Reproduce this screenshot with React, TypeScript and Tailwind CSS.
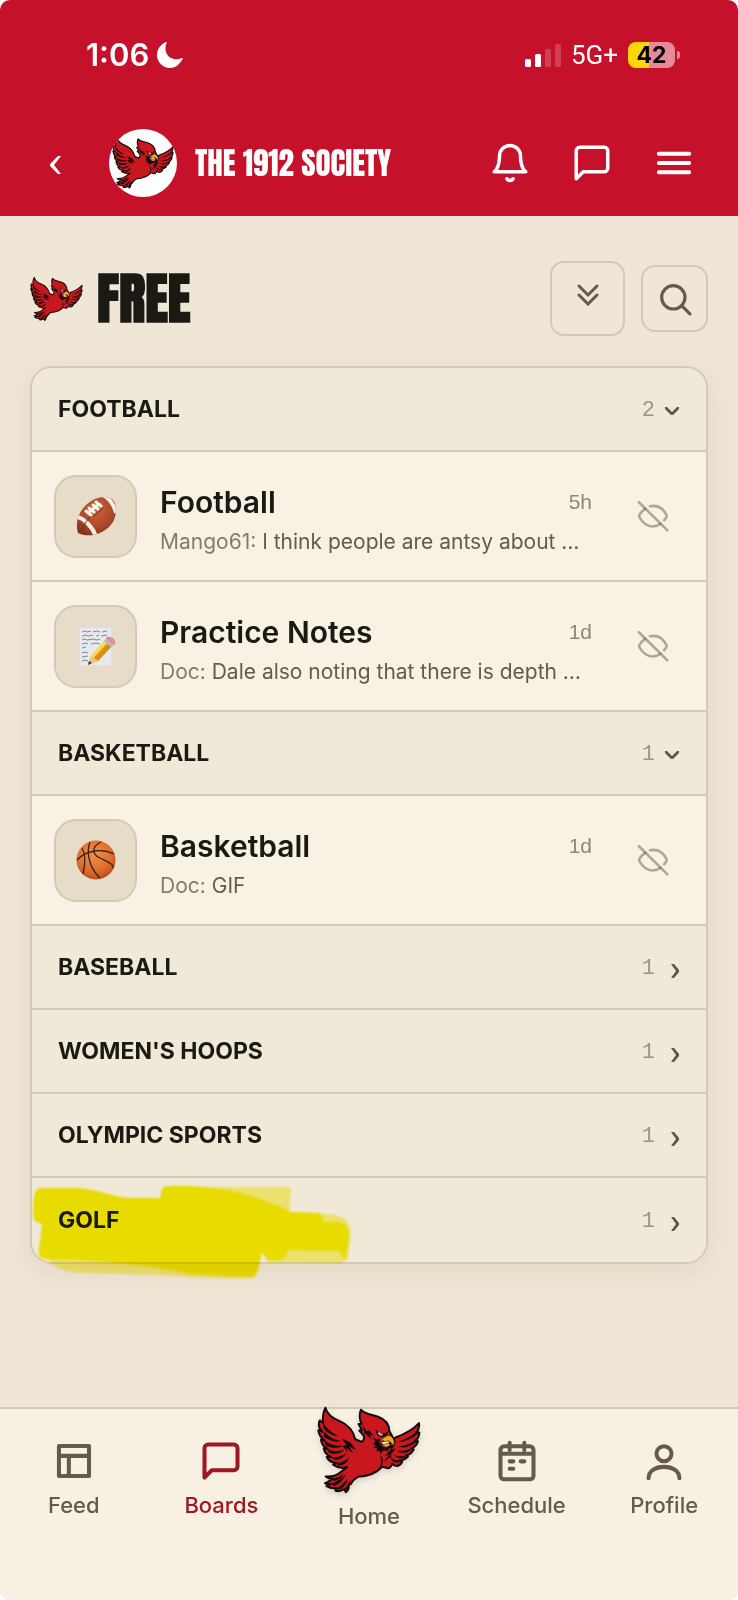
import type { ReactNode } from 'react';

type Board = { name: string; time: string; author: string; preview: string; icon: ReactNode };
type Section = { title: string; count: number; boards?: Board[] };

function Cardinal({ className }: { className?: string }) {
  return (
    <svg viewBox="82 46 310 266" className={className} aria-hidden="true">
      <g stroke="#120c0c" strokeWidth="6" strokeLinejoin="round">
        <path
          fill="#c9171e"
          d="M107 54C112 76 130 86 150 94C174 104 190 124 196 148L216 156C222 150 224 142 220 136L208 122L216 121L206 103L215 102C208 90 208 72 213 60C224 74 244 74 264 81C286 89 297 102 298 124L311 148C313 156 312 162 309 167L288 176L290 181C298 166 300 152 316 143C340 134 366 122 386 100C388 112 384 122 378 129L387 128C387 140 382 148 374 153L383 154C380 166 372 172 364 175L370 178C366 188 358 194 349 196L353 200C346 208 338 212 328 211L336 216C330 226 322 230 313 226L306 221C304 230 298 236 291 234L276 230C262 246 238 258 204 260C192 266 188 272 183 282L176 282C178 292 176 300 168 306L163 297C156 302 148 304 137 302L141 294C130 296 120 294 110 288L124 281C116 284 111 283 106 279C116 276 122 270 128 266C120 266 113 264 108 259C124 260 140 256 150 248L172 231C158 236 144 234 130 224L140 219C128 218 116 212 111 201L124 201C112 196 104 186 102 175L113 177C102 170 94 162 94 149L104 152C94 144 87 134 86 121L98 126C88 116 85 104 90 92L100 99C98 82 100 66 107 54Z"
        />
      </g>
      <g fill="#120c0c">
        <path d="M100 98C112 120 130 130 146 140C130 138 114 130 102 116ZM104 126C118 144 136 150 154 154C136 158 118 152 102 140ZM104 152C122 166 142 168 160 168C144 176 126 176 108 166ZM113 177C130 186 148 184 164 180C150 192 134 194 118 188ZM124 201C140 204 156 198 170 190C160 206 146 212 132 208ZM140 219C154 220 168 212 178 202C172 218 160 228 146 226Z" />
        <path d="M156 146L182 158L198 180L178 170L190 190L168 172L176 188L158 168L170 166Z" />
        <path d="M376 128C356 144 338 152 322 156C342 156 362 148 380 134ZM374 153C356 164 338 168 324 170C342 176 360 170 376 158ZM364 175C350 182 334 184 320 182C334 192 350 190 362 180ZM349 196C336 200 322 200 312 194C322 206 336 208 346 202ZM328 211C316 212 308 208 300 200C304 214 316 220 326 217Z" />
        <path d="M318 150L296 176L304 174L286 198L298 194L280 216L308 196L298 197L318 176L306 180Z" />
        <path d="M218 104L230 124L238 122L252 140L238 134L246 150L230 134L224 132Z" />
        <path d="M249 142C256 148 262 148 270 146L268 158L280 172L292 172L302 167C298 178 288 182 278 182L272 191L268 183L259 184L262 175L250 174L257 166L248 162L256 156Z" />
        <path d="M256 118L268 130L286 130L298 120L290 136L274 142C264 140 258 132 256 118Z" />
        <path d="M270 194C282 206 280 222 270 234C274 218 274 206 270 194Z" />
        <path d="M124 281C140 276 154 264 168 254C160 270 148 282 132 288ZM141 294C154 288 164 276 174 266C170 280 160 294 150 298ZM163 297C172 288 176 278 182 270L180 286L170 302ZM128 266C142 264 152 258 162 250C154 264 144 270 132 272Z" />
      </g>
      <path fill="#f4f6f6" d="M264 127L279 133L274 138C268 137 265 133 264 127Z" />
      <circle cx="272" cy="133" r="2" fill="#120c0c" />
      <path
        fill="#eda82a"
        stroke="#120c0c"
        strokeWidth="2"
        d="M288 139C296 134 306 138 311 150C314 158 312 164 308 168C306 160 302 156 294 154L284 160L280 152C272 156 270 150 276 147Z"
      />
      <path fill="#f3ecd2" stroke="#120c0c" strokeWidth="1.5" d="M273 156L298 153L296 160L280 164Z" />
      <path fill="#eda82a" d="M278 165L296 161L300 166L288 171Z" />
    </svg>
  );
}

function FootballIcon() {
  return (
    <svg viewBox="0 0 40 40" className="size-10" aria-hidden="true">
      <defs>
        <radialGradient id="leather" cx="50%" cy="35%" r="70%">
          <stop offset="0%" stopColor="#c9633a" />
          <stop offset="60%" stopColor="#a8472a" />
          <stop offset="100%" stopColor="#6d2a18" />
        </radialGradient>
        <clipPath id="football-shape">
          <path d="M2 37C-1 27 2 16 11 8C19 1 29-1 36 3C41 7 41 19 37 26C30 37 14 43 2 37Z" />
        </clipPath>
      </defs>
      <g clipPath="url(#football-shape)">
        <path fill="url(#leather)" d="M-2-2H42V42H-2Z" />
        <path d="M-1 20C8 22 17 31 20 41" fill="none" stroke="#f6eee0" strokeWidth="4" />
        <path d="M27-1C33 2 38 9 40 17" fill="none" stroke="#f6eee0" strokeWidth="4" />
        <path d="M6 34C8 28 12 23 16 19M17 21L27 12" fill="none" stroke="#6d2a18" strokeWidth="1" />
      </g>
      <path
        d="M10 15L15 19M13 12L18 16M17 9L22 13M20 6L25 10M12 17L23 8"
        stroke="#fbf5ea"
        strokeWidth="3"
        strokeLinecap="round"
      />
    </svg>
  );
}

function NotesIcon() {
  return (
    <svg viewBox="0 0 40 40" className="size-10" aria-hidden="true">
      <path d="M3 1H36V40H3Z" fill="#e8e9ec" stroke="#d8d9dc" strokeWidth="1" />
      <path
        d="M6 6l3-1 2 1 4-1M17 6l4-1 3 1M26 6l5-1M6 10l4-1 2 1 5-1M20 10l3-1M25 10l6-1M6 14l2-1 3 1 6-1 4 1 3-1M6 18l4-1 2 1M15 18l5-1 4 1M6 22l4-1M6 27l3-1 3 1M6 31l6-1M6 35l3-1 3 1"
        fill="none"
        stroke="#6a6c72"
        strokeWidth="0.8"
      />
      <path d="M12 39L15 30L30 13L37 19L22 35Z" fill="#f5bd26" />
      <path d="M18 32L33 16L37 19L22 35Z" fill="#d98d13" />
      <path d="M15 30L17 28L30 13L32 15L17 32Z" fill="#fbd955" />
      <path d="M12 39L15 30L22 35Z" fill="#e9c28d" />
      <path d="M12 39L13 35L16 37Z" fill="#333" />
      <path d="M28 15L31 12L38 18L35 21Z" fill="#b4bac0" />
      <path d="M31 12C34 10 40 15 38 18Z" fill="#e98b9b" stroke="#e98b9b" strokeWidth="2" strokeLinejoin="round" />
    </svg>
  );
}

function BasketballIcon() {
  return (
    <svg viewBox="0 0 40 40" className="size-10" aria-hidden="true">
      <defs>
        <radialGradient id="rubber" cx="45%" cy="35%" r="65%">
          <stop offset="0%" stopColor="#f0914f" />
          <stop offset="70%" stopColor="#dd6c2c" />
          <stop offset="100%" stopColor="#b94c1a" />
        </radialGradient>
      </defs>
      <circle cx="20" cy="20" r="19.5" fill="url(#rubber)" />
      <path
        d="M1 20C10 10 26 8 38 14M14 2C10 12 13 28 24 38M25 2C15 7 16 14 24 18C32 22 38 24 37 28M6 8C10 14 9 25 7 34"
        fill="none"
        stroke="#3b2118"
        strokeWidth="1.3"
      />
    </svg>
  );
}

const sections: Section[] = [
  {
    title: 'FOOTBALL',
    count: 2,
    boards: [
      {
        name: 'Football',
        time: '5h',
        author: 'Mango61',
        preview: 'I think people are antsy about …',
        icon: <FootballIcon />,
      },
      {
        name: 'Practice Notes',
        time: '1d',
        author: 'Doc',
        preview: 'Dale also noting that there is depth …',
        icon: <NotesIcon />,
      },
    ],
  },
  {
    title: 'BASKETBALL',
    count: 1,
    boards: [{ name: 'Basketball', time: '1d', author: 'Doc', preview: 'GIF', icon: <BasketballIcon /> }],
  },
  { title: 'BASEBALL', count: 1 },
  { title: "WOMEN'S HOOPS", count: 1 },
  { title: 'OLYMPIC SPORTS', count: 1 },
  { title: 'GOLF', count: 1 },
];

const messagePath = 'M21 15a2 2 0 0 1-2 2H7l-4 4V5a2 2 0 0 1 2-2h14a2 2 0 0 1 2 2z';

function LineIcon({ className, width, children }: { className: string; width: number; children: ReactNode }) {
  return (
    <svg
      viewBox="0 0 24 24"
      className={className}
      fill="none"
      stroke="currentColor"
      strokeWidth={width}
      strokeLinecap="round"
      strokeLinejoin="round"
      aria-hidden="true"
    >
      {children}
    </svg>
  );
}

function StatusBar() {
  return (
    <div className="flex h-[110px] items-center justify-between pr-[58px] pl-[86px]">
      <div className="flex items-center gap-2">
        <span className="text-[31px] font-semibold">1:06</span>
        <svg viewBox="0 0 26 26" className="size-[26px]" fill="currentColor" aria-hidden="true">
          <path d="M10 0C5 10 13 21 25 16C26 16 26 17 25 18C22 23 18 26 13 26C6 26 0 20 0 13C0 7 4 2 9 0C10 0 10 0 10 0Z" />
        </svg>
      </div>
      <div className="flex items-center">
        <svg viewBox="0 0 36 23" className="h-[23px] w-9" fill="currentColor" aria-hidden="true">
          <rect x="0" y="15" width="6" height="8" rx="1.5" />
          <rect x="10" y="10" width="6" height="13" rx="1.5" />
          <rect x="20" y="5" width="6" height="18" rx="1.5" opacity="0.2" />
          <rect x="30" y="0" width="6" height="23" rx="1.5" opacity="0.2" />
        </svg>
        <span className="ml-[10px] font-['Roboto',sans-serif] text-[26px]">5G+</span>
        <div className="ml-[10px] flex h-[26px] w-[47px] items-center justify-center rounded-lg bg-linear-to-r from-[#ffd60a] from-44% to-[#e8899a] to-44% text-[23px] font-bold text-black">
          42
        </div>
        <div className="ml-[2px] h-2 w-[3px] rounded-r-full bg-[#e8899a]" />
      </div>
    </div>
  );
}

function TopBar() {
  return (
    <div className="flex h-[106px] items-center pr-[31px] pl-[30px]">
      <button type="button" aria-label="Back" className="flex h-[66px] w-[52px] items-center justify-center">
        <svg viewBox="0 0 12 18" className="mt-1 h-[18px] w-3" fill="currentColor" aria-hidden="true">
          <path d="M8 0H11L4 9L11 18H8L0 10V8Z" />
        </svg>
      </button>
      <div className="ml-[27px] flex size-[68px] shrink-0 items-center justify-center overflow-hidden rounded-full bg-white">
        <Cardinal className="w-[62px]" />
      </div>
      <span className="ml-[18px] font-['Anton','Liberation_Sans_Narrow','Liberation_Sans',sans-serif] text-[31px] leading-9 whitespace-nowrap">
        THE 1912 SOCIETY
      </span>
      <div className="ml-auto flex gap-4">
        <button type="button" aria-label="Notifications" className="flex size-[66px] items-center justify-center">
          <LineIcon className="size-[42px]" width={2}>
            <path d="M18 8A6 6 0 0 0 6 8c0 7-3 9-3 9h18s-3-2-3-9M13.73 21a2 2 0 0 1-3.46 0" />
          </LineIcon>
        </button>
        <button type="button" aria-label="Messages" className="flex size-[66px] items-center justify-center">
          <LineIcon className="size-[42px]" width={2}>
            <path d={messagePath} />
          </LineIcon>
        </button>
        <button type="button" aria-label="Menu" className="flex size-[66px] items-center justify-center">
          <LineIcon className="size-[42px]" width={2.2}>
            <path d="M3.3 6.7h17.4M3.3 12h17.4M3.3 17.3h17.4" />
          </LineIcon>
        </button>
      </div>
    </div>
  );
}

function SectionHeader({ section }: { section: Section }) {
  const open = Boolean(section.boards);
  return (
    <button
      type="button"
      aria-expanded={open}
      className="flex h-[84px] w-full items-center border-b-2 border-[#d3c9b5] bg-[#f0e9d8] pr-[27px] pl-[26px] text-left group-last:border-b-0"
    >
      <span className="text-[23px] leading-7 font-bold">{section.title}</span>
      <span className="mt-1 ml-auto font-['Liberation_Mono',monospace] text-[22px] leading-7 text-[#9c9381]">
        {section.count}
      </span>
      {open ? (
        <svg viewBox="0 0 14 8" className="mt-1 ml-[10px] h-2 w-[14px] text-[#5f5645]" fill="currentColor" aria-hidden="true">
          <path d="M0 0H2L7 5L12 0H14V2L8 8H6L0 2Z" />
        </svg>
      ) : (
        <svg viewBox="0 0 8 14" className="mt-2 ml-4 h-[14px] w-2 text-[#5f5645]" fill="currentColor" aria-hidden="true">
          <path d="M0 0H3L8 6V8L3 14H0L5 7Z" />
        </svg>
      )}
    </button>
  );
}

function BoardRow({ board }: { board: Board }) {
  return (
    <li className="flex h-[130px] items-center border-b-2 border-[#d3c9b5] bg-[#f8f2e5] pr-5 pl-[22px]">
      <a href="#" className="flex min-w-0 flex-1 items-center gap-[23px]">
        <div className="flex size-[83px] shrink-0 items-center justify-center rounded-[22px] border-2 border-[#d3c9b5] bg-[#e6dcc8]">
          {board.icon}
        </div>
        <div className="min-w-0 flex-1 pt-3">
          <div className="flex items-center justify-between">
            <span className="text-[30px] leading-10 font-semibold text-[#1b1914]">{board.name}</span>
            <span className="font-['Liberation_Sans',sans-serif] text-[21px] leading-10 text-[#8f8675]">
              {board.time}
            </span>
          </div>
          <p className="truncate text-[21px] leading-10 text-[#645b4b]">
            <span className="text-[#857b6a]">{board.author}:</span> {board.preview}
          </p>
        </div>
      </a>
      <button
        type="button"
        aria-label={`Hide ${board.name}`}
        className="ml-[28px] flex size-[66px] items-center justify-center text-[#645b4b]"
      >
        <svg
          viewBox="0 0 98 98"
          className="size-8"
          fill="none"
          stroke="currentColor"
          strokeWidth="8"
          strokeLinecap="round"
          aria-hidden="true"
        >
          <g strokeOpacity="0.5">
            <path d="M6 7L93 93" />
            <path d="M25 27C16 33 10 40 7 47Q6 50 8 54C19 72 30 81 48 81Q62 81 72 73" />
            <path d="M40 19C64 15 80 25 90 46Q92 50 90 53L83 62" />
          </g>
        </svg>
      </button>
    </li>
  );
}

function Highlight() {
  return (
    <svg
      viewBox="0 0 330 100"
      className="pointer-events-none absolute -bottom-[15px] left-0 h-[100px] w-[330px] mix-blend-multiply"
      fill="#f6f000"
      aria-hidden="true"
    >
      <defs>
        <filter id="marker-edge">
          <feGaussianBlur stdDeviation="1" />
        </filter>
      </defs>
      <g filter="url(#marker-edge)">
        <path opacity="0.5" d="M134 8L258 8Q262 9 261 14L259 34H240ZM235 34L300 35Q320 37 321 54L318 78Q316 84 306 84L236 83ZM14 76Q24 93 50 94L130 96Q200 101 224 99Q229 84 230 76Z" />
        <path d="M4 17Q5 9 12 9L48 9C72 11 84 19 104 19L130 19L132 10Q133 7 140 7C186 5 226 16 262 33L290 34Q292 36 294 43L310 43Q320 46 319 60L315 82L309 72L258 71Q256 81 246 82Q236 82 232 73L228 92Q226 99 218 98L160 95C120 86 60 80 14 80Q8 80 9 70L12 45L6 43Q3 41 3 34Z" />
      </g>
    </svg>
  );
}

const tabs: { label: string; icon: ReactNode; active?: boolean }[] = [
  {
    label: 'Feed',
    icon: <path strokeLinecap="butt" d="M3.8 3.8h16.4v16.4H3.8zM3.8 9.2h16.4M9.2 9.2v11" />,
  },
  { label: 'Boards', icon: <path d={messagePath} />, active: true },
  { label: 'Home', icon: null },
  {
    label: 'Schedule',
    icon: (
      <path d="M5 4h14a2 2 0 0 1 2 2v14a2 2 0 0 1-2 2H5a2 2 0 0 1-2-2V6a2 2 0 0 1 2-2zM3 8h18M8 2v4M16 2v4M8 12.2h2M14 12.2h2M8 16.2h2" />
    ),
  },
  {
    label: 'Profile',
    icon: (
      <>
        <circle cx="12" cy="8" r="4.1" />
        <path d="M3.6 21.4c0-3.8 3.6-6.2 8.4-6.2s8.4 2.4 8.4 6.2" />
      </>
    ),
  },
];

function BottomNav() {
  return (
    <nav className="flex h-[193px] items-start border-t-2 border-[#d3c9b5] bg-[#f7f0e3]">
      {tabs.map((tab) => (
        <a
          key={tab.label}
          href="#"
          aria-current={tab.active ? 'page' : undefined}
          className={`flex flex-1 flex-col items-center text-[22px] leading-7 font-medium ${
            tab.active ? 'text-[#9f1722]' : 'text-[#645b4b]'
          }`}
        >
          {tab.icon ? (
            <LineIcon className="mt-[30px] mb-2 size-11" width={2.2}>
              {tab.icon}
            </LineIcon>
          ) : (
            <Cardinal className="-mt-1 mb-2 w-[104px] drop-shadow-md" />
          )}
          {tab.label}
        </a>
      ))}
    </nav>
  );
}

export default function App() {
  return (
    <div className="bg-white font-['Inter',sans-serif]">
      <div className="flex min-h-screen flex-col overflow-hidden rounded-[10px] bg-[#efe6d6] text-[#1b1914]">
        <header className="bg-[#c5112a] text-white">
          <StatusBar />
          <TopBar />
        </header>
        <main className="flex-1 px-[30px] pt-[45px] pb-10">
          <div className="flex h-[75px] items-center">
            <Cardinal className="w-[53px]" />
            <h1 className="ml-[14px] font-['Anton','Liberation_Sans_Narrow','Liberation_Sans',sans-serif] text-[55px] leading-none font-bold">
              FREE
            </h1>
            <button
              type="button"
              aria-label="Collapse all"
              className="ml-auto flex size-[75px] items-center justify-center rounded-[14px] border-2 border-[#d3c9b5] pb-2 text-[#645b4b]"
            >
              <svg
                viewBox="0 0 22 22"
                className="size-[22px]"
                fill="none"
                stroke="currentColor"
                strokeWidth="3"
                strokeLinecap="round"
                aria-hidden="true"
              >
                <path d="M2 2L11 11L20 2M2 11L11 20L20 11" />
              </svg>
            </button>
            <button
              type="button"
              aria-label="Search"
              className="ml-4 flex size-[67px] items-center justify-center rounded-[14px] border-2 border-[#d3c9b5] text-[#645b4b]"
            >
              <LineIcon className="size-10" width={1.9}>
                <circle cx="11" cy="11" r="7" />
                <path d="M21 21l-5-5" />
              </LineIcon>
            </button>
          </div>
          <div className="relative mt-[30px]">
            <div className="overflow-hidden rounded-[22px] border-2 border-[#d3c9b5] shadow-[0_8px_28px_rgba(150,90,60,0.10)]">
              {sections.map((section) => (
                <section key={section.title} className="group">
                  <SectionHeader section={section} />
                  {section.boards && (
                    <ul>
                      {section.boards.map((board) => (
                        <BoardRow key={board.name} board={board} />
                      ))}
                    </ul>
                  )}
                </section>
              ))}
            </div>
            <Highlight />
          </div>
        </main>
        <BottomNav />
      </div>
    </div>
  );
}
